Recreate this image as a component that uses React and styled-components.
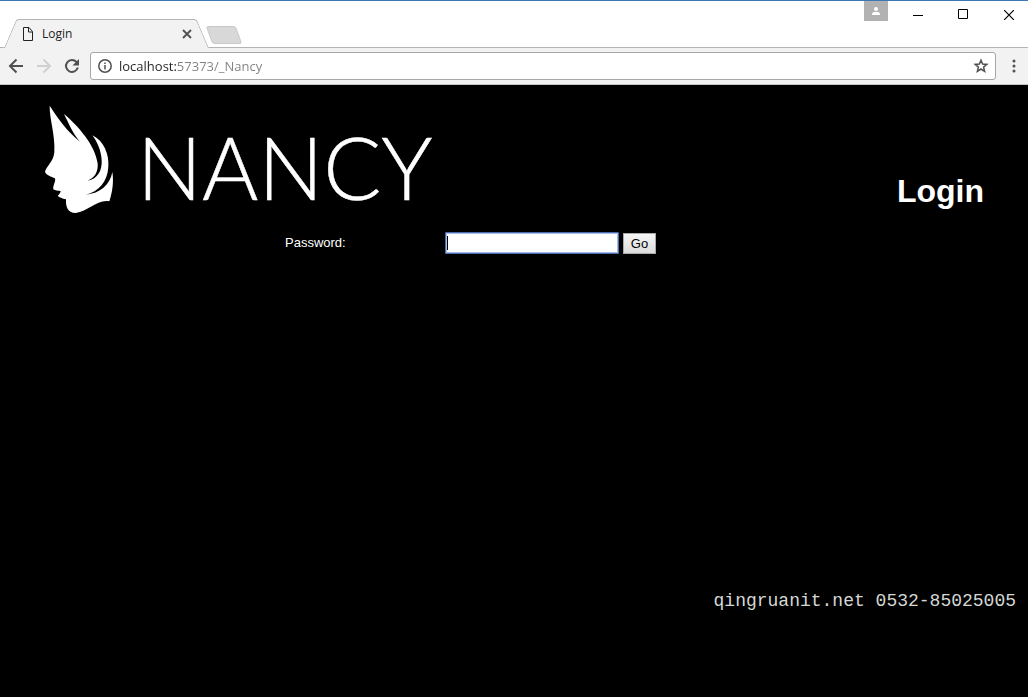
import React from "react";
import styled, { createGlobalStyle } from "styled-components";

const GlobalStyle = createGlobalStyle`
  *, *::before, *::after { box-sizing: border-box; }
  body { margin: 0; background: #000; font-family: "Liberation Sans", Arial, sans-serif; }
  button, input { font: inherit; margin: 0; }
`;

const Window = styled.div`
  position: relative;
  min-height: 100vh;
  display: flex;
  flex-direction: column;
  border-top: 1px solid #3c78b4;
`;

const TabStrip = styled.header`
  display: flex;
  justify-content: space-between;
  height: 47px;
  background: #fff;
  border-bottom: 1px solid #b4b4b4;
`;

const Tabs = styled.div`
  display: flex;
  align-items: flex-end;
  padding-left: 4px;
`;

const Tab = styled.div`
  position: relative;
  isolation: isolate;
  display: flex;
  align-items: center;
  width: 205px;
  height: 29px;
  margin-bottom: -1px;
  padding: 0 16px 0 18px;
  font: 12px/16px "Open Sans", sans-serif;
  color: #222;

  &::before, &::after {
    content: "";
    position: absolute;
    z-index: -1;
    top: 0;
    bottom: 0;
    background: #f2f2f2;
    border-top: 1px solid #b4b4b4;
  }
  &::before {
    left: 0;
    right: 40px;
    border-left: 1px solid #b4b4b4;
    border-top-left-radius: 3px;
    transform: skewX(-23deg);
    transform-origin: bottom left;
  }
  &::after {
    left: 40px;
    right: 0;
    border-right: 1px solid #b4b4b4;
    border-top-right-radius: 3px;
    transform: skewX(23deg);
    transform-origin: bottom right;
  }
`;

const TabTitle = styled.span`
  flex: 1;
  margin-left: 8px;
`;

const IconButton = styled.button`
  display: grid;
  place-items: center;
  width: ${(p) => p.$width || 28}px;
  height: ${(p) => p.$height || 28}px;
  padding: 0;
  border: 0;
  background: none;
  color: ${(p) => p.$color || "#505050"};
`;

const NewTab = styled.button`
  width: 30px;
  height: 18px;
  margin: 0 0 3px;
  padding: 0;
  border: 1px solid #c8c8c8;
  border-radius: 3px;
  background: #d8d8d8;
  transform: skewX(20deg);
`;

const WindowControls = styled.div`
  display: flex;
`;

const ProfileButton = styled.button`
  display: grid;
  place-items: center;
  width: 24px;
  height: 20px;
  margin-right: 7px;
  padding: 0;
  border: 0;
  background: #b2b2b2;
`;

const EdgeSlot = styled.div`
  padding-left: 4px;
`;

const Toolbar = styled.nav`
  display: flex;
  align-items: center;
  height: 37px;
  padding-left: 2px;
  background: #f2f2f2;
  border-bottom: 1px solid #c4c4c4;
`;

const AddressBar = styled.div`
  flex: 1;
  display: flex;
  align-items: center;
  height: 28px;
  margin-left: 4px;
  padding-left: 7px;
  border: 1px solid #a6a6a6;
  border-radius: 3px;
  background: #fff;
`;

const AddressInput = styled.input`
  flex: 1;
  min-width: 0;
  height: 20px;
  margin-left: 7px;
  padding: 0;
  border: 0;
  outline: 0;
  font: 13px/20px "Open Sans", sans-serif;
  color: transparent;
  background: linear-gradient(to right, #222 58px, #808080 58px);
  -webkit-background-clip: text;
  background-clip: text;
`;

const Page = styled.main`
  flex: 1;
  background: #000;
  color: #fff;
`;

const PageHeader = styled.div`
  display: flex;
  justify-content: space-between;
  align-items: flex-end;
  padding: 20px 44px 0;
`;

const Logo = styled.svg`
  display: block;
  width: 390px;
  height: 112px;
`;

const Heading = styled.h1`
  margin: 0 0 8px;
  font-size: 32px;
  line-height: 36px;
`;

const LoginForm = styled.form`
  display: flex;
  width: 458px;
  max-width: 100%;
  margin: 15px auto 0;
  font-size: 13px;
  line-height: 22px;
`;

const Label = styled.label`
  width: 160px;
`;

const PasswordBox = styled.div`
  position: relative;
  height: 22px;
  margin-right: 4px;

  &::after {
    content: "";
    position: absolute;
    top: 4px;
    left: 2px;
    width: 1px;
    height: 14px;
    background: #000;
  }
`;

const PasswordInput = styled.input`
  display: block;
  width: 174px;
  height: 22px;
  padding: 2px;
  border: 1px solid #4a6cb0;
  border-radius: 1px;
  outline: 0;
  background: #fff;
  box-shadow: inset 0 0 0 1px #a8bce4;
`;

const GoButton = styled.button`
  width: 33px;
  height: 21px;
  margin-top: 1px;
  padding: 0;
  border: 1px solid #a9a9a9;
  background: linear-gradient(#f6f6f6, #dcdcdc);
  color: #000;
  line-height: 18px;
`;

const Watermark = styled.p`
  position: absolute;
  right: 12px;
  bottom: 84px;
  margin: 0;
  color: #d4d8d4;
  font: 18px/24px "Liberation Mono", monospace;
`;

const Icon = ({ size = 16, children, ...rest }) => (
  <svg width={size} height={size} viewBox={`0 0 ${size} ${size}`} fill="none" stroke="currentColor" aria-hidden="true" {...rest}>
    {children}
  </svg>
);

const NancyLogo = () => (
  <Logo viewBox="44 105 390 112" role="img" aria-label="Nancy">
    <path
      transform="translate(30 95) scale(.3333)"
      fill="#fff"
      d="M59 32C82 68 112 110 150 140C126 113 116 84 102 57C145 93 195 150 203 205C205 230 195 248 173 257C203 252 217 226 215 195C213 166 202 141 187 121C222 137 238 180 235 215C233 260 205 290 168 299C210 295 240 270 247 231C252 260 247 292 238 319C200 313 175 350 137 354C112 354 107 335 108 313C96 310 88 307 83 302C88 298 91 294 92 288C84 288 75 287 70 283C68 270 78 262 75 250C63 245 50 241 45 231C49 213 70 202 73 172C76 120 58 70 59 32Z"
    />
    <text x="137" y="200" fill="#fff" stroke="#fff" strokeWidth=".5" fontFamily="Lato, sans-serif" fontWeight="300" fontSize="86">NANCY</text>
  </Logo>
);

export default function App() {
  return (
    <>
      <GlobalStyle />
      <Window>
        <TabStrip>
          <Tabs>
            <Tab>
              <Icon size={12} height="14" viewBox="0 0 12 14">
                <path d="M1.500 .5h5.500l3.500 4v9h-9zM6.500 .5v4.500h4" />
              </Icon>
              <TabTitle>Login</TabTitle>
              <IconButton $width={12} $height={16} aria-label="Close tab">
                <Icon size={10} strokeWidth="1.8"><path d="M1 1l8 8M9 1l-8 8" /></Icon>
              </IconButton>
            </Tab>
            <NewTab aria-label="New tab" />
          </Tabs>
          <WindowControls>
            <ProfileButton aria-label="Profile">
              <Icon size={8} fill="#fff" stroke="none">
                <circle cx="4" cy="2" r="2" /><path d="M0 8V7c0-3 8-3 8 0v1z" />
              </Icon>
            </ProfileButton>
            <IconButton $width={46} $color="#000" aria-label="Minimize">
              <Icon size={10}><path d="M0 5.500h10" /></Icon>
            </IconButton>
            <IconButton $width={45} $color="#000" aria-label="Maximize">
              <Icon size={12}><path d="M.5 .5h9v9h-9z" /></Icon>
            </IconButton>
            <EdgeSlot>
              <IconButton $width={38} $color="#000" aria-label="Close">
                <Icon size={10} strokeWidth="1.2"><path d="M0 0l10 10M10 0L0 10" /></Icon>
              </IconButton>
            </EdgeSlot>
          </WindowControls>
        </TabStrip>
        <Toolbar aria-label="Browser">
          <IconButton aria-label="Back">
            <Icon strokeWidth="2"><path d="M15 8H2M8.500 1.500L2 8l6.500 6.500" /></Icon>
          </IconButton>
          <IconButton $color="#d0d0d0" aria-label="Forward">
            <Icon strokeWidth="2"><path d="M1 8h13M7.500 1.500L14 8l-6.500 6.500" /></Icon>
          </IconButton>
          <IconButton aria-label="Reload">
            <Icon strokeWidth="2">
              <path d="M12.500 4A6 6 0 1 0 13.800 9.500" />
              <path d="M15 1v6.500H8.500z" fill="currentColor" stroke="none" />
            </Icon>
          </IconButton>
          <AddressBar>
            <Icon size={14} color="#505050" strokeWidth="1.5">
              <circle cx="7" cy="7" r="6.200" /><path d="M7 6v4.500M7 3.500V5" />
            </Icon>
            <AddressInput aria-label="Address" type="text" defaultValue="localhost:57373/_Nancy" />
            <IconButton aria-label="Bookmark">
              <Icon strokeWidth="1.5">
                <path d="M8 2.200l1.600 3.900 4.200.3-3.200 2.700 1 4.200L8 11l-3.600 2.300 1-4.200-3.200-2.700 4.200-.3z" />
              </Icon>
            </IconButton>
          </AddressBar>
          <EdgeSlot>
            <IconButton aria-label="Menu">
              <Icon fill="currentColor" stroke="none">
                <circle cx="8" cy="3" r="1.500" /><circle cx="8" cy="8" r="1.500" /><circle cx="8" cy="13" r="1.500" />
              </Icon>
            </IconButton>
          </EdgeSlot>
        </Toolbar>
        <Page>
          <PageHeader>
            <NancyLogo />
            <Heading>Login</Heading>
          </PageHeader>
          <LoginForm onSubmit={(e) => e.preventDefault()}>
            <Label htmlFor="password">Password:</Label>
            <PasswordBox>
              <PasswordInput id="password" type="password" />
            </PasswordBox>
            <GoButton type="submit">Go</GoButton>
          </LoginForm>
        </Page>
        <Watermark>qingruanit.net 0532-85025005</Watermark>
      </Window>
    </>
  );
}
